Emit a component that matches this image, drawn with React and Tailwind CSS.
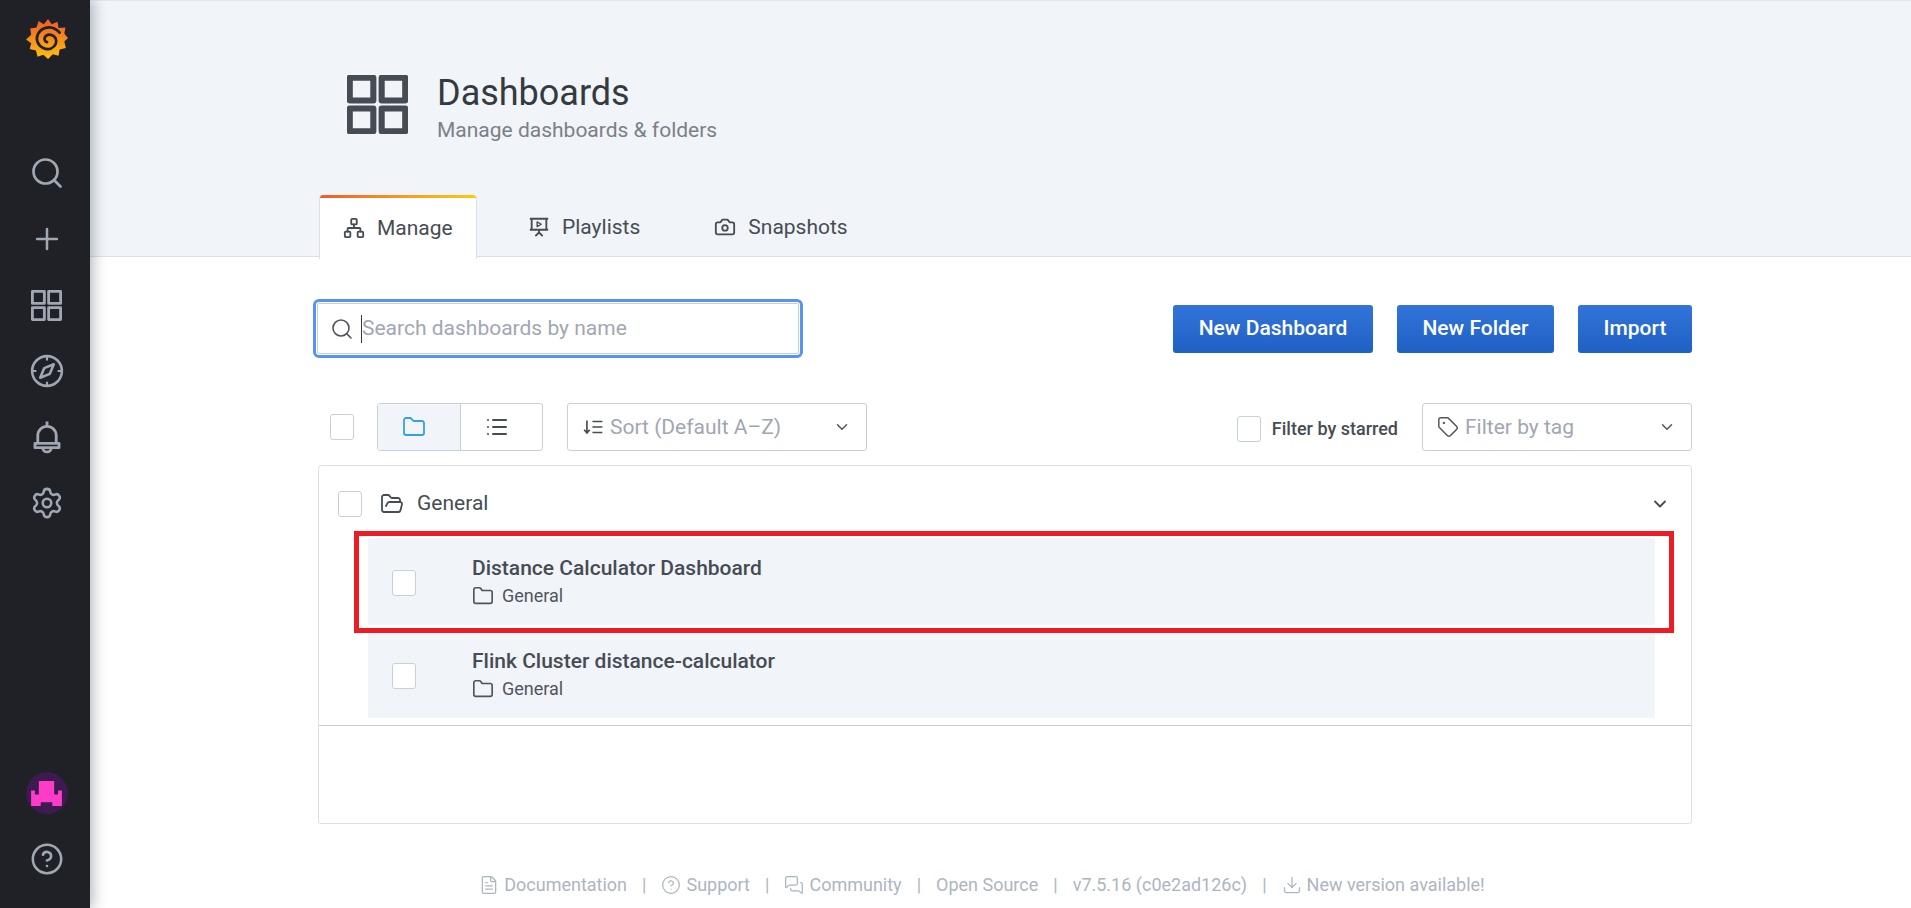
import { Search, Plus, Settings, CircleHelp, Network, Camera, Folder, FolderOpen, List, Tag, ChevronDown, FileText, MessagesSquare, Download } from 'lucide-react';

function GridIcon({ className, strokeWidth = 2 }) {
    return (
        <svg viewBox="1 1 22 22" preserveAspectRatio="none" fill="none" stroke="currentColor" strokeWidth={strokeWidth} strokeLinejoin="round" className={className}>
            <rect x="2" y="2" width="8.500" height="8.500" />
            <rect x="13.500" y="2" width="8.500" height="8.500" />
            <rect x="2" y="13.500" width="8.500" height="8.500" />
            <rect x="13.500" y="13.500" width="8.500" height="8.500" />
        </svg>
    );
}

function GrafanaLogo() {
    return (
        <svg viewBox="0 0 40 40" className="h-[42px] w-[42px]">
            <defs>
                <linearGradient id="grafana" x1="0" y1="1" x2="0" y2="0">
                    <stop offset="0" stopColor="#fcc10f" />
                    <stop offset="1" stopColor="#f05a28" />
                </linearGradient>
            </defs>
            <path
                d="M21 0l3.500 5 5.500-2.500 1 6 6.500-.5-1 6 3.500 4-3.500 3.500 1.500 6-6 1.500-1 6-5.500-1.500L21 38l-4.500-4-5.500 2-1.500-6-6-1.500L5 23 0 19.500 5 15 4 9l6-1 2-6 5 3z"
                fill="url(#grafana)"
            />
            <path d="M32 13c-4-5-10-6-15-4-5 2-8 8-6 13 2 5 8 8 13 6 4-2 6-6 4-10-2-3-6-4-9-2-2 2-2 5 1 6" fill="none" stroke="#1f2126" strokeWidth="2.600" strokeLinecap="round" />
        </svg>
    );
}

function SideCompass() {
    return (
        <svg viewBox="0 0 24 24" fill="none" stroke="currentColor" strokeWidth="1.800" className="h-[34px] w-[34px]">
            <circle cx="12" cy="12" r="10.500" />
            <path d="M12 1.500v3M12 19.500v3M1.500 12h3M19.500 12h3" strokeWidth="1.500" />
            <path d="M16.800 7.200l-2.800 6.800-6.800 2.800 2.800-6.800z" strokeLinejoin="round" />
        </svg>
    );
}

function SideBell() {
    return (
        <svg viewBox="0 0 24 24" fill="none" stroke="currentColor" strokeWidth="2" strokeLinejoin="round" className="h-[34px] w-[34px]">
            <path d="M12 1v3M5.500 16v-5a6.500 6.500 0 0 1 13 0v5" />
            <path d="M3.500 16.500h17v3h-17z" />
            <path d="M9 19.500a3 3 0 0 0 6 0" />
        </svg>
    );
}

function PresentationIcon() {
    return (
        <svg viewBox="0 0 24 24" fill="none" stroke="#464c54" strokeWidth="2" className="h-[22px] w-[22px]">
            <path d="M2 3h20M4 3v12h16V3M2 15h20M12 15v3M12 18l-4 4M12 18l4 4" />
            <path d="M10 6.500l4.500 2.500-4.500 2.500z" strokeWidth="1.500" strokeLinejoin="round" />
        </svg>
    );
}

function SortIcon() {
    return (
        <svg viewBox="0 0 20 20" fill="none" stroke="#464c54" strokeWidth="1.500" className="h-[22px] w-[22px]">
            <path d="M4.500 4v11M2 12.500l2.500 3 2.500-3M9.500 5h9M9.500 10h9M9.500 15h9" />
        </svg>
    );
}

function Checkbox({ className = '' }) {
    return <div className={`h-[26px] w-[24px] shrink-0 rounded-[3px] border border-[#c7d0d9] bg-white ${className}`} />;
}

function SideItem({ children }) {
    return <div className="flex h-[66px] items-center justify-center pl-[3px] text-[#9fa7b3]">{children}</div>;
}

function Sidebar() {
    return (
        <aside className="z-10 flex h-[908px] w-[90px] shrink-0 flex-col bg-[#1f2126] shadow-[4px_0_12px_rgba(30,40,60,0.3)]">
            <div className="flex h-[80px] items-center justify-center pl-[3px]"><GrafanaLogo /></div>
            <div className="mt-[60px]">
                <SideItem><Search size={36} strokeWidth={1.800} /></SideItem>
                <SideItem><Plus size={34} strokeWidth={1.800} /></SideItem>
                <SideItem><GridIcon className="h-[31px] w-[31px]" strokeWidth={2} /></SideItem>
                <SideItem><SideCompass /></SideItem>
                <SideItem><SideBell /></SideItem>
                <SideItem><Settings size={34} strokeWidth={1.800} /></SideItem>
            </div>
            <div className="mt-auto pb-[16px]">
                <div className="flex h-[66px] items-center justify-center pl-[3px]">
                    <div className="flex h-[42px] w-[42px] items-center justify-center rounded-full bg-[#3d1a4f]">
                        <svg viewBox="0 0 32 26" className="h-[25px] w-[33px]" fill="#ff3cc7">
                            <path d="M8 0h16v14h4v-4h4v16H22v-4h-12v4H0V10h4v4h4z" />
                        </svg>
                    </div>
                </div>
                <SideItem><CircleHelp size={34} strokeWidth={1.800} /></SideItem>
            </div>
        </aside>
    );
}

function Tab({ icon, label, active }) {
    if (active) {
        return (
            <div className="relative flex h-[64px] w-[158px] flex-col rounded-t-[3px] border-x border-[#dce1e6] bg-white">
                <div className="h-[3px] rounded-t-[3px] bg-gradient-to-r from-[#f05a28] to-[#fbca0a]" />
                <div className="flex flex-1 items-center gap-[12px] pl-[23px] pb-[1px] text-[#464c54]">
                    {icon}
                    <span className="text-[21px] leading-none">{label}</span>
                </div>
            </div>
        );
    }
    return (
        <div className="flex h-[64px] items-center gap-[12px] text-[#464c54]">
            {icon}
            <span className="text-[21px] leading-none">{label}</span>
        </div>
    );
}

function Header() {
    return (
        <header className="h-[257px] border-y border-t-[#e3e6eb] border-b-[#dce1e6] bg-[#f1f4f9] pl-[229px]">
            <div className="flex items-start gap-[29px] pl-[28px] pt-[74px]">
                <GridIcon className="h-[59px] w-[61px] text-[#464c54]" strokeWidth={2.200} />
                <div className="-mt-[1px]">
                    <h1 className="text-[36px] leading-[38px] text-[#343b40]">Dashboards</h1>
                    <p className="mt-[6px] text-[21px] leading-[24px] text-[#7b8087]">Manage dashboards &amp; folders</p>
                </div>
            </div>
            <nav className="mt-[53px] flex items-start">
                <Tab active label="Manage" icon={<Network size={22} strokeWidth={2} />} />
                <div className="ml-[51px]"><Tab label="Playlists" icon={<PresentationIcon />} /></div>
                <div className="ml-[74px]"><Tab label="Snapshots" icon={<Camera size={22} strokeWidth={2} />} /></div>
            </nav>
        </header>
    );
}

function SelectBox({ className, icon, label }) {
    return (
        <div className={`flex h-[48px] items-center justify-between rounded-[3px] border border-[#c7d0d9] bg-white pl-[14px] pr-[15px] ${className}`}>
            <div className="flex items-center gap-[6px]">
                {icon}
                <span className="mt-[1px] text-[21px] text-[#9fa7b3]">{label}</span>
            </div>
            <ChevronDown size={18} strokeWidth={2} className="text-[#52545c]" />
        </div>
    );
}

function DashboardRow({ title }) {
    return (
        <div className="flex h-[87px] items-center rounded-[2px] bg-[#f1f4f9] pl-[24px]">
            <Checkbox className="mt-[2px]" />
            <div className="ml-[56px]">
                <div className="text-[21px] font-medium leading-[26px] text-[#464c54]">{title}</div>
                <div className="mt-[3px] flex items-center gap-[8px] text-[#52545c]">
                    <Folder size={22} strokeWidth={1.800} />
                    <span className="text-[18px] leading-[24px]">General</span>
                </div>
            </div>
        </div>
    );
}

function FooterLink({ icon, label, last }) {
    return (
        <div className="flex items-center">
            {icon}
            <span className={icon ? 'ml-[5px]' : ''}>{label}</span>
            {!last && <span className="mx-[15px]">|</span>}
        </div>
    );
}

export default function App() {
    return (
        <div className="flex h-[908px] overflow-hidden bg-white font-['Roboto',sans-serif]">
            <Sidebar />
            <main className="min-w-0 flex-1">
                <Header />
                <div className="ml-[228px] w-[1374px]">
                    <div className="-ml-[5px] mt-[42px] flex items-center justify-between">
                        <div className="w-[490px] rounded-[6px] border-[3px] border-[#5794f2] p-[1px]">
                            <div className="flex h-[51px] items-center rounded-[2px] border border-[#c7d0d9] bg-white pl-[12px]">
                                <Search size={24} strokeWidth={1.600} className="text-[#52545c]" />
                                <div className="ml-[7px] h-[28px] w-px bg-[#343b40]" />
                                <span className="text-[21px] text-[#9fa7b3]">Search dashboards by name</span>
                            </div>
                        </div>
                        <div className="flex gap-[24px]">
                            {[['New Dashboard', 'w-[200px]'], ['New Folder', 'w-[157px]'], ['Import', 'w-[114px]']].map(([label, width]) => (
                                <button key={label} className={`h-[48px] rounded-[3px] bg-gradient-to-b from-[#3274d9] to-[#1f60c4] text-[21px] font-medium text-white ${width}`}>{label}</button>
                            ))}
                        </div>
                    </div>

                    <div className="mt-[45px] flex items-center">
                        <Checkbox className="ml-[12px]" />
                        <div className="ml-[23px] flex h-[48px] w-[166px] rounded-[3px] border border-[#c7d0d9]">
                            <div className="flex w-[83px] items-center justify-center border-r border-[#c7d0d9] bg-[#f1f4f9] pr-[10px]">
                                <Folder size={24} strokeWidth={1.800} className="text-[#33a2e5]" />
                            </div>
                            <div className="flex flex-1 items-center justify-center pr-[10px]">
                                <List size={24} strokeWidth={2} className="text-[#464c54]" />
                            </div>
                        </div>
                        <SelectBox className="ml-[24px] w-[300px]" icon={<SortIcon />} label="Sort (Default A–Z)" />
                        <div className="ml-auto flex items-center">
                            <Checkbox className="mt-[3px]" />
                            <span className="ml-[11px] mt-[3px] text-[18px] font-medium text-[#464c54]">Filter by starred</span>
                            <SelectBox className="ml-[24px] w-[270px]" icon={<Tag size={22} strokeWidth={1.600} className="text-[#52545c]" />} label="Filter by tag" />
                        </div>
                    </div>

                    <section className="relative mt-[14px] h-[359px] rounded-[3px] border border-[#dce1e6]">
                        <div className="flex h-[72px] items-center pl-[19px] pr-[21px] pt-[3px]">
                            <Checkbox />
                            <FolderOpen size={24} strokeWidth={1.800} className="ml-[18px] text-[#464c54]" />
                            <span className="ml-[13px] text-[21px] text-[#464c54]">General</span>
                            <ChevronDown size={20} strokeWidth={2.200} className="ml-auto text-[#464c54]" />
                        </div>
                        <div className="ml-[49px] mr-[36px] space-y-[6px]">
                            <DashboardRow title="Distance Calculator Dashboard" />
                            <DashboardRow title="Flink Cluster distance-calculator" />
                        </div>
                        <div className="mt-[7px] border-t border-[#c7d0d9]" />
                        {/* red annotation box over the first row */}
                        <div className="absolute left-[35px] right-[17px] top-[65px] h-[102px] border-[5px] border-[#ed1c24]" />
                    </section>

                    <footer className="mt-[51px] flex justify-center pr-[46px] text-[18px] leading-[20px] text-[#acb6bf]">
                        <FooterLink icon={<FileText size={20} strokeWidth={1.500} />} label="Documentation" />
                        <FooterLink icon={<CircleHelp size={20} strokeWidth={1.500} />} label="Support" />
                        <FooterLink icon={<MessagesSquare size={20} strokeWidth={1.500} />} label="Community" />
                        <FooterLink label="Open Source" />
                        <FooterLink label="v7.5.16 (c0e2ad126c)" />
                        <FooterLink icon={<Download size={20} strokeWidth={1.500} />} label="New version available!" last />
                    </footer>
                </div>
            </main>
        </div>
    );
}
